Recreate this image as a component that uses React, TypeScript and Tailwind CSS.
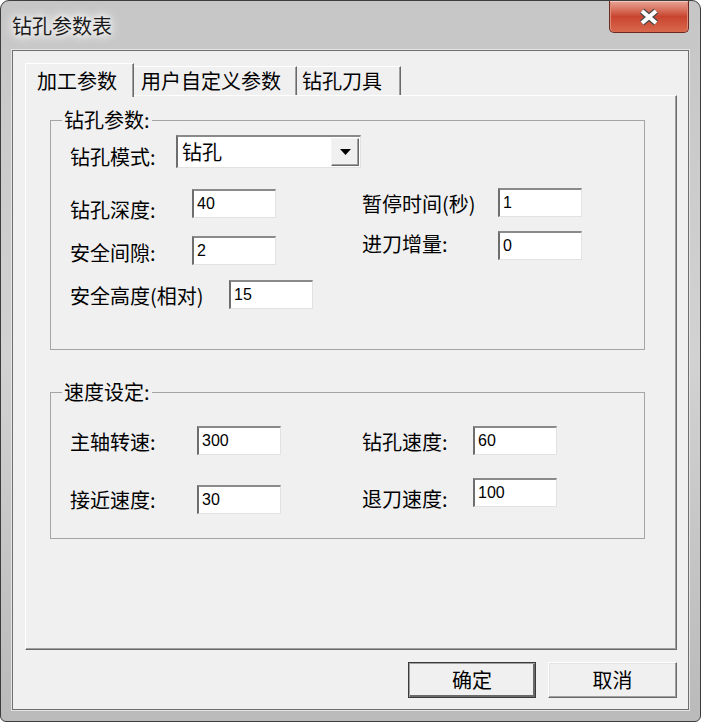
import React from 'react';

const cjk = "font-['Noto_Sans_CJK_SC',sans-serif]";

function CloseButton() {
  return (
    <div className="flex h-[32px] w-[80px] items-center justify-center rounded-b-[5px] border border-t-0 border-[#6b2a20] bg-gradient-to-b from-[#e7a596] via-[#c9442f] to-[#d8684c] shadow-[inset_0_1px_0_#f3c7bb,inset_1px_0_0_#e08b76,inset_-1px_0_0_#e08b76]">
      <svg width="24" height="18" viewBox="0 0 24 18">
        <path d="M5 3 L19 15 M19 3 L5 15" stroke="#4a4a4a" strokeWidth="6.5" />
        <path d="M5 3 L19 15 M19 3 L5 15" stroke="#ffffff" strokeWidth="4" />
      </svg>
    </div>
  );
}

function TextBox({ value, w = 'w-[84px]' }: { value: string; w?: string }) {
  return (
    <div
      className={`${w} flex h-[29px] shrink-0 items-center border-t-2 border-l-2 border-b border-r border-t-[#8a8a8a] border-l-[#6e6e6e] border-b-[#e2e2e2] border-r-[#e2e2e2] bg-white pl-[3px] font-['Liberation_Sans',sans-serif] text-[16px] text-black`}
    >
      {value}
    </div>
  );
}

function Field({
  label,
  value,
  labelW,
  labelPad,
  className = '',
}: {
  label: string;
  value: string;
  labelW: string;
  labelPad: string;
  className?: string;
}) {
  return (
    <div className={`flex items-start ${className}`}>
      <span className={`${labelW} ${labelPad} shrink-0 leading-[20px]`}>{label}</span>
      <TextBox value={value} />
    </div>
  );
}

function ComboBox() {
  return (
    <div className="flex h-[33px] w-[185px] items-stretch border-t-2 border-l-2 border-b border-r border-t-[#8a8a8a] border-l-[#6e6e6e] border-b-[#e2e2e2] border-r-[#e2e2e2] bg-white">
      <span className="flex flex-1 items-center pl-[4px] leading-[20px]">钻孔</span>
      <div className="my-[1px] mr-[1px] flex w-[28px] items-center justify-center border-t border-l border-b border-r border-t-[#f4f4f4] border-l-[#f4f4f4] border-b-[#696969] border-r-[#696969] bg-[#f0f0f0] shadow-[inset_-1px_-1px_0_#a0a0a0]">
        <svg width="11" height="6" viewBox="0 0 11 6">
          <path d="M0 0 H11 L5.5 6 Z" fill="#000" />
        </svg>
      </div>
    </div>
  );
}

export default function App() {
  return (
    <div className="h-[722px] w-[701px] bg-white">
      <div className={`${cjk} flex h-full w-full flex-col rounded-t-[9px] rounded-b-[6px] border border-[#3d3d3d] bg-gradient-to-b from-[#c6c6c6] via-[#d2d2d2] to-[#bababa] px-[11px] pb-[11px] text-[20px] text-black`}>
        {/* title bar */}
        <div className="flex h-[49px] shrink-0 items-start justify-between">
          <span className="mt-[14px] leading-[22px] text-[#1a1a1a] [text-shadow:0_0_6px_#fff,0_0_12px_#fff,0_0_14px_#fff]">
            钻孔参数表
          </span>
          <CloseButton />
        </div>

        {/* client area */}
        <div className="flex flex-1 flex-col border border-[#6f6f6f] bg-[#f0f0f0] pt-[12px] pr-[11px] pb-[11px] pl-[12px] shadow-[0_0_0_1px_#e4e4e4]">
          {/* tabs */}
          <div className="flex h-[32px] shrink-0 items-end">
            <div className="relative z-10 -mb-[2px] flex h-[34px] w-[109px] items-center border-t border-l border-r border-t-white border-l-white border-r-[#696969] bg-[#f0f0f0] pl-[11px] leading-[20px] shadow-[inset_-1px_0_0_#a0a0a0]">
              加工参数
            </div>
            <div className="flex h-[29px] w-[163px] items-center border-t border-r border-t-white border-r-[#696969] pl-[7px] leading-[20px] shadow-[inset_-1px_0_0_#a0a0a0]">
              用户自定义参数
            </div>
            <div className="flex h-[29px] w-[104px] items-center border-t border-r border-t-white border-r-[#696969] pl-[5px] leading-[20px] shadow-[inset_-1px_0_0_#a0a0a0]">
              钻孔刀具
            </div>
          </div>

          {/* tab page */}
          <div className="flex flex-1 flex-col border-t border-l border-b border-r border-t-white border-l-white border-b-[#696969] border-r-[#696969] pl-[24px] shadow-[inset_-1px_-1px_0_#a0a0a0]">
            <fieldset className="mt-[14px] w-[595px] border border-[#a5a5a5] pb-[40px]">
              <legend className="ml-[11px] px-[2px] leading-[20px]">钻孔参数:</legend>
              <div className="mt-[5px] flex items-start pl-[19px]">
                <span className="w-[106px] shrink-0 pt-[12px] leading-[20px]">钻孔模式:</span>
                <ComboBox />
              </div>
              <div className="mt-[20px] flex items-start pl-[19px]">
                <div className="flex w-[292px] shrink-0 flex-col pt-[1px]">
                  <Field label="钻孔深度:" value="40" labelW="w-[122px]" labelPad="pt-[11px]" />
                  <Field label="安全间隙:" value="2" labelW="w-[122px]" labelPad="pt-[7px]" className="mt-[16px]" />
                  <Field label="安全高度(相对)" value="15" labelW="w-[159px]" labelPad="pt-[6px]" className="mt-[15px]" />
                </div>
                <div className="flex flex-col">
                  <Field label="暂停时间(秒)" value="1" labelW="w-[136px]" labelPad="pt-[6px]" />
                  <Field label="进刀增量:" value="0" labelW="w-[136px]" labelPad="pt-[3px]" className="mt-[14px]" />
                </div>
              </div>
            </fieldset>

            <fieldset className="mt-[32px] w-[595px] border border-[#a5a5a5] pb-[24px]">
              <legend className="ml-[11px] px-[2px] leading-[20px]">速度设定:</legend>
              <div className="mt-[24px] flex items-start pl-[19px]">
                <div className="flex w-[292px] shrink-0 flex-col">
                  <Field label="主轴转速:" value="300" labelW="w-[127px]" labelPad="pt-[6px]" />
                  <Field label="接近速度:" value="30" labelW="w-[127px]" labelPad="pt-[5px]" className="mt-[30px]" />
                </div>
                <div className="flex flex-col">
                  <Field label="钻孔速度:" value="60" labelW="w-[111px]" labelPad="pt-[6px]" />
                  <Field label="退刀速度:" value="100" labelW="w-[111px]" labelPad="pt-[11px]" className="mt-[23px]" />
                </div>
              </div>
            </fieldset>
          </div>

          {/* buttons */}
          <div className="mt-[12px] flex shrink-0 justify-end gap-[12px]">
            <button className="flex h-[36px] w-[128px] items-center justify-center border border-[#3a3a3a] bg-[#f0f0f0] leading-[20px] shadow-[inset_1px_1px_0_#a0a0a0,inset_-2px_-2px_0_#6a6a6a]">
              确定
            </button>
            <button className="flex h-[36px] w-[129px] items-center justify-center border-t border-l border-b border-r border-t-white border-l-white border-b-[#696969] border-r-[#696969] bg-[#f0f0f0] leading-[20px] shadow-[inset_-1px_-1px_0_#a0a0a0,inset_1px_1px_0_#e3e3e3]">
              取消
            </button>
          </div>
        </div>
      </div>
    </div>
  );
}
